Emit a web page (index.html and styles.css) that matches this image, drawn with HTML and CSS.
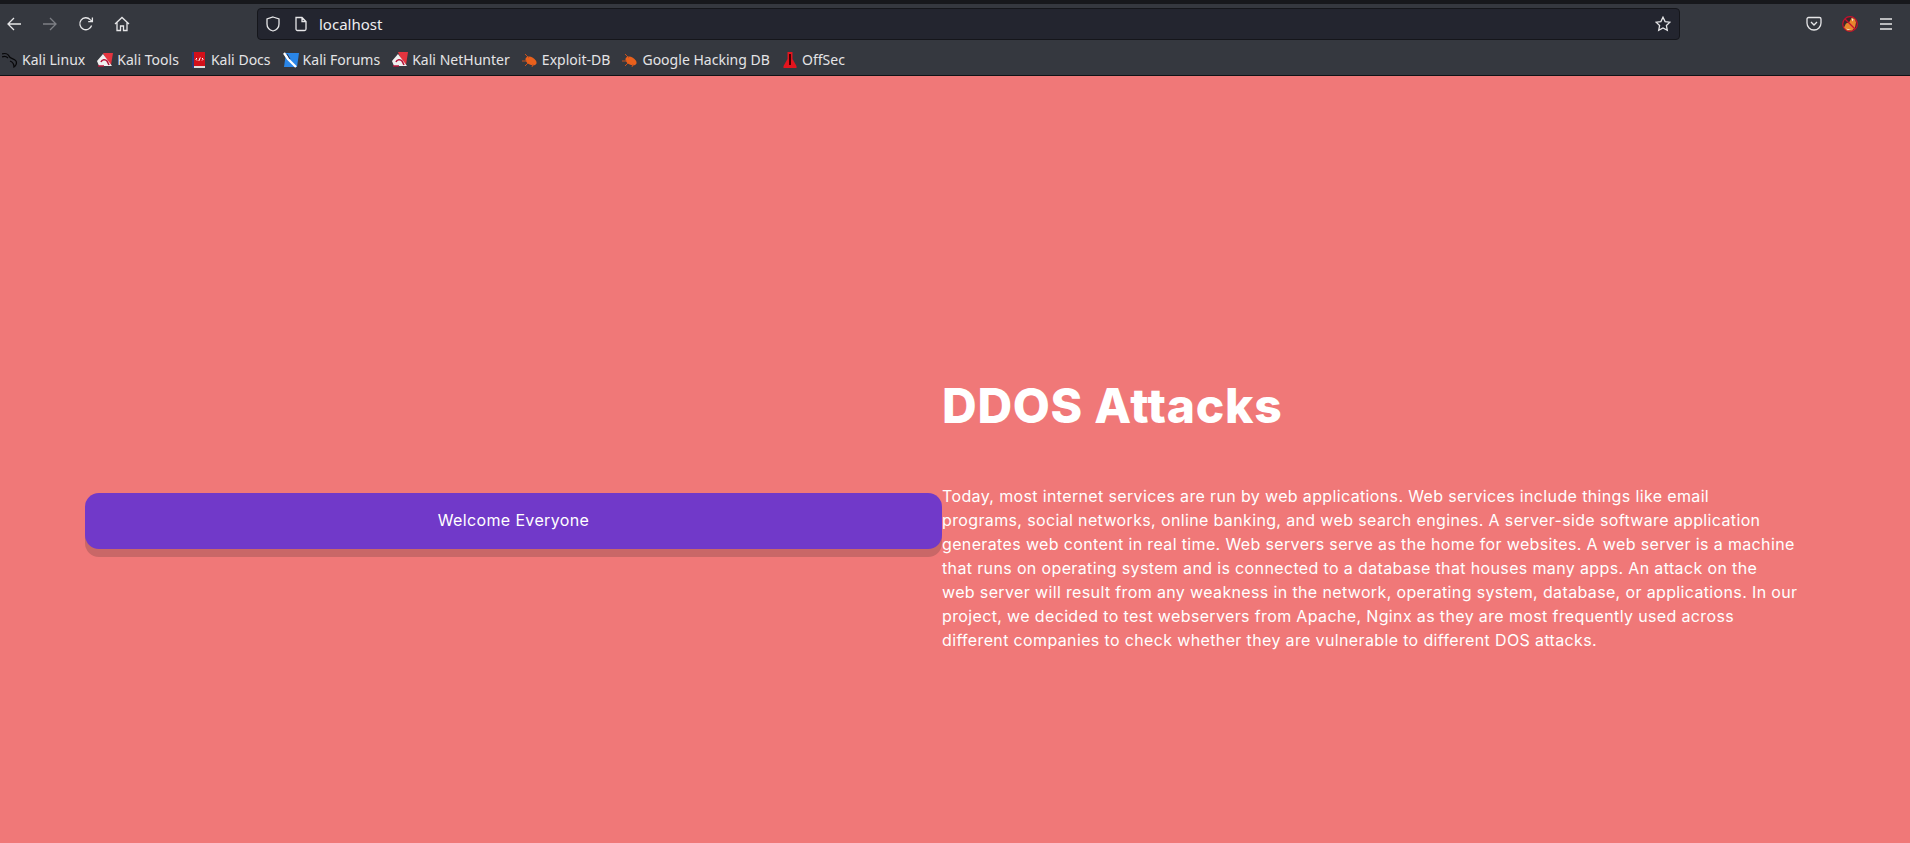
FILE: index.html
```html
<!DOCTYPE html>
<html lang="en">
<head>
    <meta charset="UTF-8">
    <meta name="viewport" content="width=device-width, initial-scale=1.0">
    <title>localhost</title>
    <link rel="stylesheet" href="styles.css">
</head>
<body>
    <div class="titlebar"></div>
    <div class="toolbar">
        <div class="nav">
            <svg class="icon" viewBox="0 0 16 16"><path d="M15 8H2M8 2L2 8l6 6"/></svg>
            <svg class="icon dim" viewBox="0 0 16 16"><path d="M1 8h13M8 2l6 6-6 6"/></svg>
            <svg class="icon" viewBox="0 0 16 16"><path d="M13.6 9.500A6 6 0 1 1 12.200 3.600L14 5.400M14.400 1.400v4.200h-4.200"/></svg>
            <svg class="icon" viewBox="0 0 16 16"><path d="M1 8l7-6.500L15 8M3 6.500V14.500h3.500V10h3v4.500H13V6.500"/></svg>
        </div>
        <div class="urlbar">
            <svg class="icon" viewBox="0 0 16 16"><path d="M8 1l6 2v5c0 3.500-2.500 6-6 7-3.500-1-6-3.500-6-7V3z"/></svg>
            <svg class="icon page" viewBox="0 0 16 16"><path d="M3 1.500h6l4 4v7.500a1.500 1.500 0 0 1-1.500 1.500h-7A1.500 1.500 0 0 1 3 13zM9 1.500v4h4"/></svg>
            <span class="url">localhost</span>
            <svg class="icon star" viewBox="0 0 16 16"><path d="M8 1.200l2.100 4.400 4.800.6-3.500 3.300.9 4.800L8 12l-4.300 2.300.9-4.800L1.100 6.200l4.800-.6z"/></svg>
        </div>
        <div class="tools">
            <svg class="icon" viewBox="0 0 16 16"><path d="M2.500 1.500h11a1.500 1.500 0 0 1 1.500 1.500v4a7 7 0 0 1-14 0V3a1.500 1.500 0 0 1 1.500-1.500zM5 6l3 3 3-3"/></svg>
            <svg class="fox" viewBox="0 0 16 16">
                <circle cx="8" cy="8" r="7.300" fill="#3a2a2c" stroke="#c8102e" stroke-width="1.200"/>
                <path d="M10 1.500l3 2 1 3-1 5-3 3H5l-3-3 2-4 3-1z" fill="#e8862c"/>
                <path d="M9.500 2l2 1.500-1 2z" fill="#f4f0ea"/>
                <path d="M4 12.500l2 1.500h3z" fill="#f4f0ea"/>
                <path d="M3 3l10 10" stroke="#c8102e" stroke-width="1.200"/>
            </svg>
            <svg class="icon" viewBox="0 0 16 16"><path d="M2 3h12M2 8h12M2 13h12"/></svg>
        </div>
    </div>
    <div class="bookmarks">
        <a class="mark">
            <svg class="fav" viewBox="0 0 16 16"><path d="M0 2c3-1 6 0 7 2 1 3 5 2 7 5 1 2 0 5-2 6 0-3-1-5-4-6M0 5c2-1 4-1 6 1" fill="none" stroke="#08080a" stroke-width="1.300"/></svg>
            Kali Linux
        </a>
        <a class="mark">
            <svg class="fav" viewBox="0 0 16 16"><path d="M6 1h10L14 13 9 7z" fill="#e5343f"/><path d="M0 9l6-7 9 12H2z" fill="#f0f0f0"/><path d="M4 10a3.500 3.500 0 0 1 6-1l2 4M1 14h6" fill="none" stroke="#b3153a" stroke-width="1.600"/></svg>
            Kali Tools
        </a>
        <a class="mark">
            <svg class="fav" viewBox="0 0 16 16"><rect x="1" y="0" width="2.500" height="16" fill="#2b3a7a"/><rect x="3" y="0" width="11" height="14" fill="#d3101a"/><rect x="3" y="14" width="11" height="2" fill="#ddd"/><path d="M6 6L4.800 7.200 6 8.500M11 6l1.200 1.200L11 8.500M9.300 5.500L7.800 9" fill="none" stroke="#fff"/></svg>
            Kali Docs
        </a>
        <a class="mark">
            <svg class="fav" viewBox="0 0 16 16"><path d="M3 1h13l-2 14H1z" fill="#2a86e8"/><path d="M1 1l4 6 8 8" fill="none" stroke="#fff" stroke-width="2.300"/><path d="M4 2l3 5" stroke="#334" stroke-width="1"/></svg>
            Kali Forums
        </a>
        <a class="mark">
            <svg class="fav" viewBox="0 0 16 16"><path d="M6 0h10L14 13 9 7z" fill="#e5343f"/><path d="M0 9l6-7 9 12H2z" fill="#f0f0f0"/><path d="M4 10a3.500 3.500 0 0 1 6-1l2 4M1 14h6" fill="none" stroke="#b3153a" stroke-width="1.600"/></svg>
            Kali NetHunter
        </a>
        <a class="mark">
            <svg class="fav" viewBox="0 0 16 16"><ellipse cx="9" cy="9" rx="6" ry="3.800" transform="rotate(30 9 9)" fill="#e8601c"/><path d="M0 9l5 0M3 2l4 4M3 14l3-3M10 15l1-3" stroke="#c9501c"/></svg>
            Exploit-DB
        </a>
        <a class="mark">
            <svg class="fav" viewBox="0 0 16 16"><ellipse cx="9" cy="9" rx="6" ry="3.800" transform="rotate(30 9 9)" fill="#e8601c"/><path d="M0 9l5 0M3 2l4 4M3 14l3-3M10 15l1-3" stroke="#c9501c"/></svg>
            Google Hacking DB
        </a>
        <a class="mark">
            <svg class="fav" viewBox="0 0 16 16"><path d="M5.500 0h5v7l4 7v2h-13v-2l4-7z" fill="#e3141e"/><path d="M8 2v11" stroke="#400" stroke-width="2"/></svg>
            OffSec
        </a>
    </div>

    <main class="hero">
        <div class="left">
            <button class="welcome">Welcome Everyone</button>
        </div>
        <div class="right">
            <h1>DDOS Attacks</h1>
            <p>Today, most internet services are run by web applications. Web services include things like email<br>
            programs, social networks, online banking, and web search engines. A server-side software application<br>
            generates web content in real time. Web servers serve as the home for websites. A web server is a machine<br>
            that runs on operating system and is connected to a database that houses many apps. An attack on the<br>
            web server will result from any weakness in the network, operating system, database, or applications. In our<br>
            project, we decided to test webservers from Apache, Nginx as they are most frequently used across<br>
            different companies to check whether they are vulnerable to different DOS attacks.</p>
        </div>
    </main>
</body>
</html>
```

FILE: styles.css
```css
* {
    box-sizing: border-box;
}
html, body {
    height: 100%;
}
body {
    margin: 0;
    background-color: #f07878;
    font-family: "Inter", sans-serif;
    color: white;
    overflow: hidden;
}
.titlebar {
    height: 4px;
    background-color: #17181c;
}
.toolbar {
    height: 40px;
    background-color: #35383f;
    display: flex;
    align-items: center;
    padding-left: 6px;
}
.icon {
    width: 16px;
    height: 16px;
    flex: none;
    fill: none;
    stroke: #e6e6e8;
    stroke-width: 1.300;
}
.icon.dim {
    stroke: #7d7f85;
}
.nav {
    display: flex;
    gap: 20px;
    width: 251px;
}
.urlbar {
    width: 1423px;
    height: 32px;
    display: flex;
    align-items: center;
    padding: 0 8px 0 7px;
    background-color: #23252f;
    border: 1px solid #15161b;
    border-radius: 4px;
}
.urlbar .page {
    margin-left: 12px;
}
.url {
    margin-left: 10px;
    flex: 1;
    font-family: "Noto Sans", sans-serif;
    font-size: 15px;
    color: #eeeeef;
}
.tools {
    display: flex;
    align-items: center;
    gap: 20px;
    margin-left: 126px;
}
.fox {
    width: 16px;
    height: 16px;
    flex: none;
}
.bookmarks {
    height: 32px;
    background-color: #35383f;
    border-bottom: 1px solid #111216;
    display: flex;
    align-items: center;
    padding-left: 2px;
    gap: 12px;
    font-family: "Noto Sans", sans-serif;
    font-size: 14px;
    letter-spacing: 0.02px;
    color: #e4e4e6;
}
.mark {
    display: flex;
    align-items: center;
    gap: 4px;
    white-space: nowrap;
}
.fav {
    width: 16px;
    height: 16px;
    flex: none;
}
.hero {
    display: flex;
    align-items: center;
    height: 767px;
    padding: 122px 0 0 85px;
}
.left {
    width: 857px;
    flex: none;
}
.welcome {
    width: 100%;
    height: 56px;
    padding: 0 0 2px;
    border: none;
    border-radius: 14px;
    background-color: #7139c9;
    box-shadow: 0 8px 0 #c96767;
    color: white;
    font-family: "Inter", sans-serif;
    font-size: 16px;
    letter-spacing: 0.36px;
}
.right {
    padding-bottom: 20px;
}
.right h1 {
    margin: 0 0 42px;
    font-size: 48px;
    font-weight: 800;
    line-height: 72px;
    letter-spacing: 0.7px;
}
.right p {
    margin: 0;
    font-size: 16px;
    line-height: 24px;
    letter-spacing: 0.36px;
    white-space: nowrap;
}
```
